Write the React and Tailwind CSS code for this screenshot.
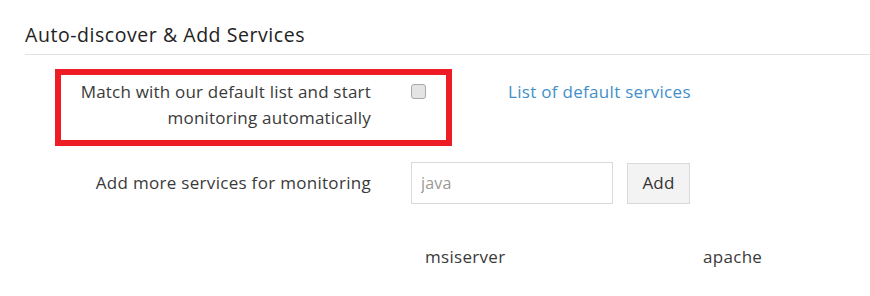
import React from "react";

const App = () => {
  return (
    <div
      className="w-[870px] h-[296px] bg-white overflow-hidden pl-[25px] pt-[21px] tracking-[0.2px]"
      style={{ fontFamily: "'Open Sans', Lato, sans-serif" }}
    >
      <div className="border-b border-[#e2e2e2] pb-[5px]">
        <h2 className="text-[19.5px] leading-[28px] tracking-[0.55px] text-[#222]">
          Auto-discover &amp; Add Services
        </h2>
      </div>

      <div className="ml-[30px] mt-[14px] flex items-start">
        <div className="flex items-start border-[6px] border-[#ee1c25] pt-[4px] pb-[9px] pr-[20px]">
          <div className="w-[310px] text-right text-[17px] leading-[26px] text-[#3a3a3a]">
            Match with our default list and start
            <br />
            monitoring automatically
          </div>
          <input
            type="checkbox"
            className="ml-[40px] mt-[5px] w-[15px] h-[15px] appearance-none rounded-[3px] border border-[#a9a9a9] bg-[#e4e4e4]"
          />
        </div>
        <a href="#" className="ml-[56px] mt-[10px] text-[17px] leading-[26px] tracking-[0.3px] text-[#3f8fcb]">
          List of default services
        </a>
      </div>

      <div className="ml-[30px] mt-[16px] flex items-center">
        <div className="w-[316px] text-right text-[17px] tracking-[0.3px] text-[#3a3a3a]">
          Add more services for monitoring
        </div>
        <input
          type="text"
          placeholder="java"
          className="ml-[40px] w-[202px] h-[42px] border border-[#d9d9d9] px-[9px] text-[16px] placeholder:text-[#999] outline-none"
        />
        <button className="ml-[14px] w-[63px] h-[41px] bg-[#f3f3f3] border border-[#d9d9d9] text-[17px] text-[#333]">
          Add
        </button>
      </div>

      <div className="ml-[30px] mt-[41px] flex text-[17px] leading-[24px] tracking-[0.3px] text-[#3a3a3a]">
        <div className="ml-[370px] w-[278px]">msiserver</div>
        <div>apache</div>
      </div>
    </div>
  );
};

export default App;
